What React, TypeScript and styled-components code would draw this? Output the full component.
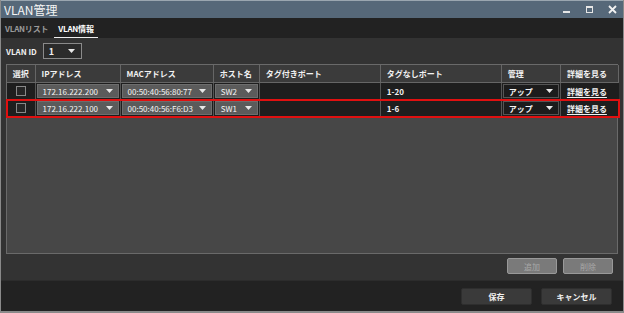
import React from 'react'
import styled, { createGlobalStyle } from 'styled-components'

type Row = {
  ip: string
  mac: string
  host: string
  tagged: string
  untagged: string
  admin: string
  selected?: boolean
}

const rows: Row[] = [
  { ip: '172.16.222.200', mac: '00:50:40:56:80:77', host: 'SW2', tagged: '', untagged: '1-20', admin: 'アップ' },
  { ip: '172.16.222.100', mac: '00:50:40:56:F6:D3', host: 'SW1', tagged: '', untagged: '1-6', admin: 'アップ', selected: true },
]

const columns = [
  { label: '選択', width: 28 },
  { label: 'IPアドレス', width: 85 },
  { label: 'MACアドレス', width: 93 },
  { label: 'ホスト名', width: 46 },
  { label: 'タグ付きポート', width: 121 },
  { label: 'タグなしポート', width: 121 },
  { label: '管理', width: 59 },
  { label: '詳細を見る', width: 58 },
]

const Caret = () => (
  <svg width="7" height="4" viewBox="0 0 7 4">
    <path d="M0 0h7L3.5 4z" fill="#e8e8e8" />
  </svg>
)

export default function App() {
  return (
    <>
      <GlobalStyle />
      <Window>
        <TitleBar>
          <Title>VLAN管理</Title>
          <Controls>
            <svg width="9" height="9" viewBox="0 0 9 9">
              <rect x="1" y="6" width="7" height="2" fill="#e6e6e6" />
            </svg>
            <svg width="9" height="9" viewBox="0 0 9 9">
              <rect x="1.5" y="1.5" width="6" height="6" fill="none" stroke="#e6e6e6" strokeWidth="1" />
              <rect x="1" y="1" width="7" height="2" fill="#e6e6e6" />
            </svg>
            <svg width="9" height="9" viewBox="0 0 9 9">
              <path d="M1 1l7 7M8 1l-7 7" stroke="#f2f2f2" strokeWidth="1.8" />
            </svg>
          </Controls>
        </TitleBar>
        <TabBar>
          <Tab>VLANリスト</Tab>
          <Tab $active>VLAN情報</Tab>
        </TabBar>
        <Content>
          <VlanRow>
            <Label>VLAN ID</Label>
            <IdSelect>
              <span>1</span>
              <Caret />
            </IdSelect>
          </VlanRow>
          <TableBox>
            <Table>
              <colgroup>
                {columns.map((c) => (
                  <col key={c.label} style={{ width: c.width }} />
                ))}
              </colgroup>
              <thead>
                <tr>
                  {columns.map((c) => (
                    <Th key={c.label} $center={c.label === '選択'}>
                      {c.label}
                    </Th>
                  ))}
                </tr>
              </thead>
              <tbody>
                {rows.map((r) => (
                  <Tr key={r.ip} $selected={r.selected}>
                    <Td $center>
                      <Check />
                    </Td>
                    <Td $pad>
                      <Dropdown>
                        <span>{r.ip}</span>
                        <Caret />
                      </Dropdown>
                    </Td>
                    <Td $pad>
                      <Dropdown>
                        <span>{r.mac}</span>
                        <Caret />
                      </Dropdown>
                    </Td>
                    <Td $pad>
                      <Dropdown>
                        <span>{r.host}</span>
                        <Caret />
                      </Dropdown>
                    </Td>
                    <Td>{r.tagged}</Td>
                    <Td>
                      <CellText>{r.untagged}</CellText>
                    </Td>
                    <Td $pad>
                      <DarkDropdown>
                        <span>{r.admin}</span>
                        <Caret />
                      </DarkDropdown>
                    </Td>
                    <Td>
                      <DetailLink>詳細を見る</DetailLink>
                    </Td>
                  </Tr>
                ))}
              </tbody>
            </Table>
          </TableBox>
          <ActionRow>
            <GhostButton disabled>追加</GhostButton>
            <GhostButton disabled>削除</GhostButton>
          </ActionRow>
        </Content>
        <Footer>
          <FooterButton>保存</FooterButton>
          <FooterButton>キャンセル</FooterButton>
        </Footer>
      </Window>
    </>
  )
}

const GlobalStyle = createGlobalStyle`
  html, body {
    margin: 0;
    background: #222;
  }
  body {
    font-family: "Noto Sans CJK JP", "Noto Sans", sans-serif;
    color: #eee;
  }
`

const Window = styled.div`
  width: 624px;
  height: 313px;
  box-sizing: border-box;
  display: flex;
  flex-direction: column;
  border-left: 1px solid #8a8a8a;
  border-right: 1px solid #8a8a8a;
  border-bottom: 2px solid #8a8a8a;
  overflow: hidden;
`

const TitleBar = styled.div`
  height: 17px;
  flex-shrink: 0;
  background: #566879;
  display: flex;
  align-items: center;
  justify-content: space-between;
  padding: 0 6px 0 3px;
  border-top: 1px solid #9aa6b0;
`

const Title = styled.div`
  font-size: 12px;
  color: #f4f4f4;
  line-height: 1;
`

const Controls = styled.div`
  display: flex;
  gap: 14px;
  align-items: center;
`

const TabBar = styled.div`
  height: 20px;
  flex-shrink: 0;
  background: #222;
  display: flex;
  align-items: center;
  gap: 2px;
  padding: 0;
`

const Tab = styled.div<{ $active?: boolean }>`
  font-size: 8px;
  font-weight: bold;
  letter-spacing: -0.2px;
  color: ${({ $active }) => ($active ? '#fff' : '#9a9a9a')};
  padding: 2px 4px 3px;
  border-bottom: 2px solid ${({ $active }) => ($active ? '#eee' : 'transparent')};
  margin-top: 3px;
`

const Content = styled.div`
  flex: 1;
  background: #333;
  padding: 4px 5px 6px 5px;
  display: flex;
  flex-direction: column;
`

const VlanRow = styled.div`
  display: flex;
  align-items: center;
  gap: 6px;
  height: 18px;
`

const Label = styled.div`
  font-size: 8px;
  font-weight: bold;
  color: #f0f0f0;
`

const IdSelect = styled.div`
  width: 39px;
  height: 16px;
  box-sizing: border-box;
  border: 1px solid #8a8a8a;
  background: #2b2b2b;
  display: flex;
  align-items: center;
  justify-content: space-between;
  padding: 0 6px 0 5px;
  font-size: 9px;
  font-weight: bold;
`

const TableBox = styled.div`
  margin-top: 4px;
  height: 190px;
  background: #474747;
  border: 1px solid #6a6a6a;
  box-sizing: border-box;
`

const Table = styled.table`
  width: 612px;
  table-layout: fixed;
  border-collapse: collapse;
  font-size: 8px;
`

const Th = styled.th<{ $center?: boolean }>`
  height: 17px;
  padding: ${({ $center }) => ($center ? '0' : '0 6px')};
  background: #3b3b3b;
  border: 1px solid #666;
  border-top: none;
  color: #f2f2f2;
  font-weight: bold;
  white-space: nowrap;
  text-align: ${({ $center }) => ($center ? 'center' : 'left')};
  &:first-child {
    border-left: none;
  }
`

const Tr = styled.tr<{ $selected?: boolean }>`
  height: 16px;
  outline: ${({ $selected }) => ($selected ? '2px solid #e01010' : 'none')};
  outline-offset: -1px;
  border-bottom: 1px solid #3f6a6a;
`

const Td = styled.td<{ $center?: boolean; $pad?: boolean }>`
  background: #1e1e1e;
  border-left: 1px solid #555;
  padding: ${({ $pad }) => ($pad ? '1px 1px' : '0 6px')};
  color: #f2f2f2;
  text-align: ${({ $center }) => ($center ? 'center' : 'left')};
  vertical-align: middle;
  white-space: nowrap;
  &:first-child {
    border-left: none;
  }
`

const Check = styled.div`
  width: 8px;
  height: 8px;
  margin: 0 auto;
  border: 1px solid #888;
  background: #262626;
`

const Dropdown = styled.div`
  height: 14px;
  box-sizing: border-box;
  background: #5b5b5b;
  border: 1px solid #6e6e6e;
  display: flex;
  align-items: center;
  justify-content: space-between;
  padding: 0 5px;
  color: #f4f4f4;
  font-size: 8px;
`

const DarkDropdown = styled(Dropdown)`
  background: #1c1c1c;
  border-color: #555;
  font-weight: bold;
`

const CellText = styled.span`
  font-weight: bold;
`

const DetailLink = styled.span`
  font-weight: bold;
  text-decoration: underline;
  text-underline-offset: 2px;
`

const ActionRow = styled.div`
  display: flex;
  justify-content: flex-end;
  gap: 6px;
  margin-top: 4px;
  padding-right: 5px;
`

const GhostButton = styled.button`
  width: 50px;
  height: 16px;
  font-family: inherit;
  font-size: 8px;
  background: #7a7a7a;
  color: #a8a8a8;
  border: 1px solid #999;
  border-radius: 2px;
`

const Footer = styled.div`
  height: 31px;
  flex-shrink: 0;
  background: #222;
  display: flex;
  justify-content: flex-end;
  align-items: center;
  gap: 9px;
  padding: 0 11px 3px 0;
  border-top: 1px solid #2c2c2c;
`

const FooterButton = styled.button`
  width: 71px;
  height: 17px;
  font-family: inherit;
  font-size: 8px;
  font-weight: bold;
  background: #3a3a3a;
  color: #f2f2f2;
  border: 1px solid #2e2e2e;
  border-radius: 2px;
`
